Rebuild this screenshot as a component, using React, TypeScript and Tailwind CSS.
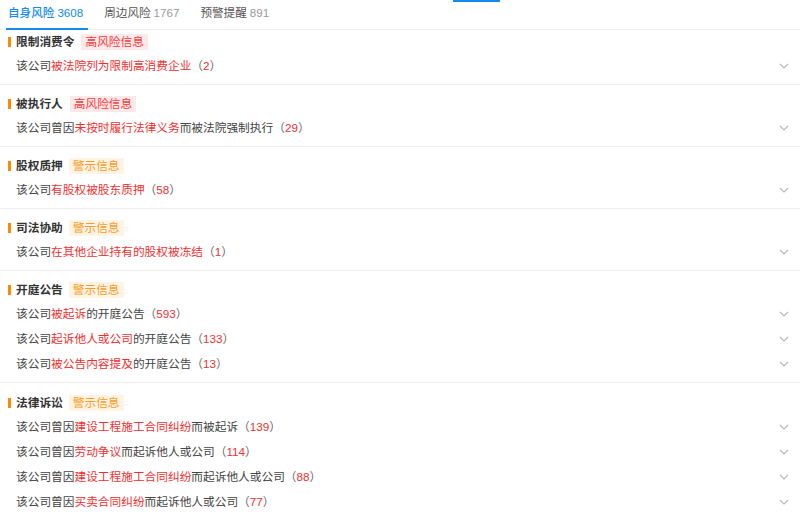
import React from "react";

type Part = { t: string; red?: boolean };
type Row = { parts: Part[]; count: number };
type Section = { title: string; level: "high" | "warn"; rows: Row[] };

const n = (t: string): Part => ({ t });
const r = (t: string): Part => ({ t, red: true });

const sections: Section[] = [
  { title: "限制消费令", level: "high", rows: [{ parts: [n("该公司"), r("被法院列为限制高消费企业")], count: 2 }] },
  { title: "被执行人", level: "high", rows: [{ parts: [n("该公司曾因"), r("未按时履行法律义务"), n("而被法院强制执行")], count: 29 }] },
  { title: "股权质押", level: "warn", rows: [{ parts: [n("该公司"), r("有股权被股东质押")], count: 58 }] },
  { title: "司法协助", level: "warn", rows: [{ parts: [n("该公司"), r("在其他企业持有的股权被冻结")], count: 1 }] },
  {
    title: "开庭公告",
    level: "warn",
    rows: [
      { parts: [n("该公司"), r("被起诉"), n("的开庭公告")], count: 593 },
      { parts: [n("该公司"), r("起诉他人或公司"), n("的开庭公告")], count: 133 },
      { parts: [n("该公司"), r("被公告内容提及"), n("的开庭公告")], count: 13 },
    ],
  },
  {
    title: "法律诉讼",
    level: "warn",
    rows: [
      { parts: [n("该公司曾因"), r("建设工程施工合同纠纷"), n("而被起诉")], count: 139 },
      { parts: [n("该公司曾因"), r("劳动争议"), n("而起诉他人或公司")], count: 114 },
      { parts: [n("该公司曾因"), r("建设工程施工合同纠纷"), n("而起诉他人或公司")], count: 88 },
      { parts: [n("该公司曾因"), r("买卖合同纠纷"), n("而起诉他人或公司")], count: 77 },
    ],
  },
];

function Chevron() {
  return (
    <svg width="10" height="6" viewBox="0 0 10 6" fill="none">
      <path d="M1 1 L5 5 L9 1" stroke="#b8b8b8" strokeWidth="1.2" />
    </svg>
  );
}

export default function App() {
  return (
    <div
      className="relative w-[800px] h-[515px] overflow-hidden bg-white text-[#333]"
      style={{ fontFamily: '"Liberation Sans", "Noto Sans CJK SC", sans-serif' }}
    >
      <div className="absolute left-[453px] top-0 w-[47px] h-[2px] bg-[#128bed]" />
      {/* Tabs */}
      <div className="flex h-[30px] border-b border-[#eeeeee] text-[11.6px]">
        <div className="relative flex items-start pt-[4px] pl-[8px] pr-[21px]">
          <span className="text-[#128bed] font-medium">自身风险</span>
          <span className="ml-[3px] text-[#128bed]">3608</span>
          <div className="absolute left-[6px] right-[16px] bottom-[-1px] h-[2px] bg-[#128bed]" />
        </div>
        <div className="flex items-start pt-[4px] pr-[21px]">
          <span className="text-[#555]">周边风险</span>
          <span className="ml-[3px] text-[#999]">1767</span>
        </div>
        <div className="flex items-start pt-[4px]">
          <span className="text-[#555]">预警提醒</span>
          <span className="ml-[3px] text-[#999]">891</span>
        </div>
      </div>

      {sections.map((s, i) => (
        <div
          key={s.title}
          className={`${i === 0 ? "pt-[1px]" : i === sections.length - 1 ? "pt-[9px] border-t border-[#eeeeee]" : "pt-[8px] border-t border-[#eeeeee]"} pb-[6px]`}
        >
          <div className="flex items-center h-[22px]">
            <div className="ml-[8px] w-[3px] h-[10px] bg-[#ff8a00]" />
            <span className="ml-[5px] text-[11.7px] font-bold text-[#333]">{s.title}</span>
            {s.level === "high" ? (
              <span className="ml-[7px] px-[4px] h-[16px] leading-[16px] text-[11.7px] bg-[#fde9e9] text-[#f5393b]">
                高风险信息
              </span>
            ) : (
              <span className="ml-[6px] px-[4px] h-[16px] leading-[16px] text-[11.7px] bg-[#fff4e3] text-[#fb9b26]">
                警示信息
              </span>
            )}
          </div>
          {s.rows.map((row, j) => (
            <div key={j} className="flex items-center justify-between h-[25px] pl-[16px] pr-[11px] text-[11.7px]">
              <span className="text-[#444]">
                {row.parts.map((p, k) => (
                  <span key={k} className={p.red ? "text-[#f0302f]" : ""}>
                    {p.t}
                  </span>
                ))}
                <span className="text-[#666]">（</span>
                <span className="text-[#f0302f]">{row.count}</span>
                <span className="text-[#666]">）</span>
              </span>
              <Chevron />
            </div>
          ))}
        </div>
      ))}
    </div>
  );
}
